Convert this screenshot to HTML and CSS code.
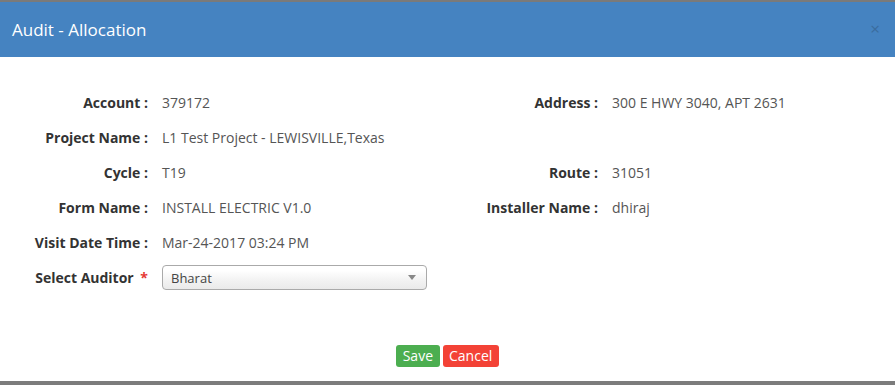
FILE: index.html
```html
<!doctype html>
<html lang="en">
<head>
    <meta charset="UTF-8">
    <meta name="viewport" content="width=device-width, initial-scale=1.0">
    <title>Audit - Allocation</title>
    <link rel="stylesheet" href="styles.css">
</head>
<body>
    <div class="modal">
        <div class="modal-header">
            <h4 class="modal-title">Audit - Allocation</h4>
            <span class="close">&times;</span>
        </div>
        <div class="modal-body">
            <div class="info-grid">
                <div class="field"><label>Account :</label><span>379172</span></div>
                <div class="field"><label>Address :</label><span>300 E HWY 3040, APT 2631</span></div>

                <div class="field"><label>Project Name :</label><span>L1 Test Project - LEWISVILLE,Texas</span></div>
                <div class="field"></div>

                <div class="field"><label>Cycle :</label><span>T19</span></div>
                <div class="field"><label>Route :</label><span>31051</span></div>

                <div class="field"><label>Form Name :</label><span>INSTALL ELECTRIC V1.0</span></div>
                <div class="field"><label>Installer Name :</label><span>dhiraj</span></div>

                <div class="field"><label>Visit Date Time :</label><span>Mar-24-2017 03:24 PM</span></div>
                <div class="field"></div>

                <div class="field"><label>Select Auditor <em class="req">*</em></label>
                    <div class="chosen">
                        <span>Bharat</span>
                        <b class="arrow"></b>
                    </div>
                </div>
                <div class="field"></div>
            </div>
        </div>
        <div class="modal-footer">
            <button class="btn btn-save">Save</button>
            <button class="btn btn-cancel">Cancel</button>
        </div>
    </div>
</body>
</html>
```

FILE: styles.css
```css
body {
    margin: 0;
    padding: 0;
    font-family: "Open Sans", Arial, sans-serif;
    background: #fff;
}
.modal {
    border-top: 2px solid #7a7a7a;
    border-bottom: 4px solid #7c7c7c;
    display: flex;
    flex-direction: column;
    height: 379px;
}
.modal-header {
    background-color: #4583c1;
    height: 55px;
    display: flex;
    align-items: center;
    justify-content: space-between;
    padding: 0 12px;
}
.modal-title {
    margin: 0;
    color: #fff;
    font-weight: normal;
    font-size: 17px;
    padding-bottom: 1px;
}
.close {
    color: #3a6c9e;
    font-size: 17px;
    line-height: 1;
    margin-right: 3px;
    margin-top: -2px;
}
.modal-body {
    padding: 28px 0 0;
}
.info-grid {
    display: grid;
    grid-template-columns: 450px 1fr;
    grid-auto-rows: 35px;
}
.field {
    display: flex;
    align-items: center;
    font-size: 14px;
}
.field label {
    width: 148px;
    text-align: right;
    font-weight: bold;
    color: #333;
    margin-right: 14px;
    flex-shrink: 0;
}
.field span {
    color: #555;
}
.req {
    color: #e53935;
    font-style: normal;
    margin-left: 3px;
}
.chosen {
    width: 245px;
    height: 23px;
    border: 1px solid #aaa;
    border-radius: 4px;
    background: linear-gradient(#fff 20%, #f3f3f3 60%, #eaeaea);
    display: flex;
    align-items: center;
    justify-content: space-between;
    padding: 0 10px 0 8px;
}
.chosen span {
    font-size: 13px;
    color: #444;
}
.arrow {
    width: 0;
    height: 0;
    border-left: 4px solid transparent;
    border-right: 4px solid transparent;
    border-top: 5px solid #888;
}
.modal-footer {
    margin-top: auto;
    display: flex;
    justify-content: center;
    gap: 3px;
    padding-bottom: 14px;
}
.btn {
    font-family: "Open Sans", Arial, sans-serif;
    font-size: 14px;
    color: #fff;
    border: none;
    border-radius: 3px;
    padding: 1px 6.5px;
    height: 22px;
    line-height: 20px;
}
.btn-save {
    background-color: #4cae50;
}
.btn-cancel {
    background-color: #f34236;
}
```
